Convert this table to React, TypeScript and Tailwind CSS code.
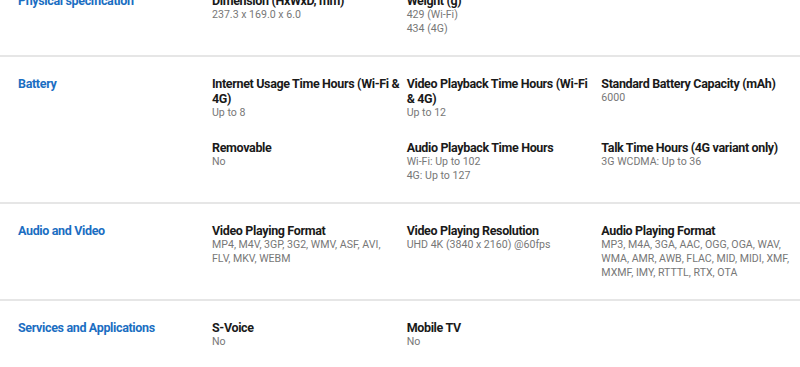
import React from "react";

type Item = { title: string; values: string[] };
type Section = { label: string; items: Item[] };

const sections: Section[] = [
  {
    label: "Physical specification",
    items: [
      { title: "Dimension (HxWxD, mm)", values: ["237.3 x 169.0 x 6.0"] },
      { title: "Weight (g)", values: ["429 (Wi-Fi)", "434 (4G)"] },
    ],
  },
  {
    label: "Battery",
    items: [
      { title: "Internet Usage Time Hours (Wi-Fi & 4G)", values: ["Up to 8"] },
      { title: "Video Playback Time Hours (Wi-Fi & 4G)", values: ["Up to 12"] },
      { title: "Standard Battery Capacity (mAh)", values: ["6000"] },
      { title: "Removable", values: ["No"] },
      { title: "Audio Playback Time Hours", values: ["Wi-Fi: Up to 102", "4G: Up to 127"] },
      { title: "Talk Time Hours (4G variant only)", values: ["3G WCDMA: Up to 36"] },
    ],
  },
  {
    label: "Audio and Video",
    items: [
      { title: "Video Playing Format", values: ["MP4, M4V, 3GP, 3G2, WMV, ASF, AVI, FLV, MKV, WEBM"] },
      { title: "Video Playing Resolution", values: ["UHD 4K (3840 x 2160) @60fps"] },
      {
        title: "Audio Playing Format",
        values: ["MP3, M4A, 3GA, AAC, OGG, OGA, WAV, WMA, AMR, AWB, FLAC, MID, MIDI, XMF, MXMF, IMY, RTTTL, RTX, OTA"],
      },
    ],
  },
  {
    label: "Services and Applications",
    items: [
      { title: "S-Voice", values: ["No"] },
      { title: "Mobile TV", values: ["No"] },
    ],
  },
];

export default function App() {
  return (
    <div
      className="w-[800px] h-[367px] overflow-hidden bg-white"
      style={{ fontFamily: "Roboto, 'Noto Sans', sans-serif" }}
    >
      <div className="mt-[-26px]">
        {sections.map((s, i) => (
          <div
            key={s.label}
            className={
              "flex pt-[19px] pb-[19px] " + (i < sections.length - 1 ? "border-b-2 border-[#e6e6e6]" : "")
            }
          >
            <div className="w-[212px] shrink-0 pl-[18px] text-[12.5px] leading-[15px] font-bold tracking-[-0.35px] text-[#1b6ec2]">
              {s.label}
            </div>
            <div className="grid grid-cols-3 w-[584px] gap-y-[20px]">
              {s.items.map((it) => (
                <div key={it.title} className="pr-[6px]">
                  <div className="text-[12.5px] leading-[15px] font-bold tracking-[-0.35px] text-[#1a1a1a]">
                    {it.title}
                  </div>
                  {it.values.map((v) => (
                    <div key={v} className="text-[10.6px] leading-[14px] text-[#777777]">
                      {v}
                    </div>
                  ))}
                </div>
              ))}
            </div>
          </div>
        ))}
      </div>
    </div>
  );
}
